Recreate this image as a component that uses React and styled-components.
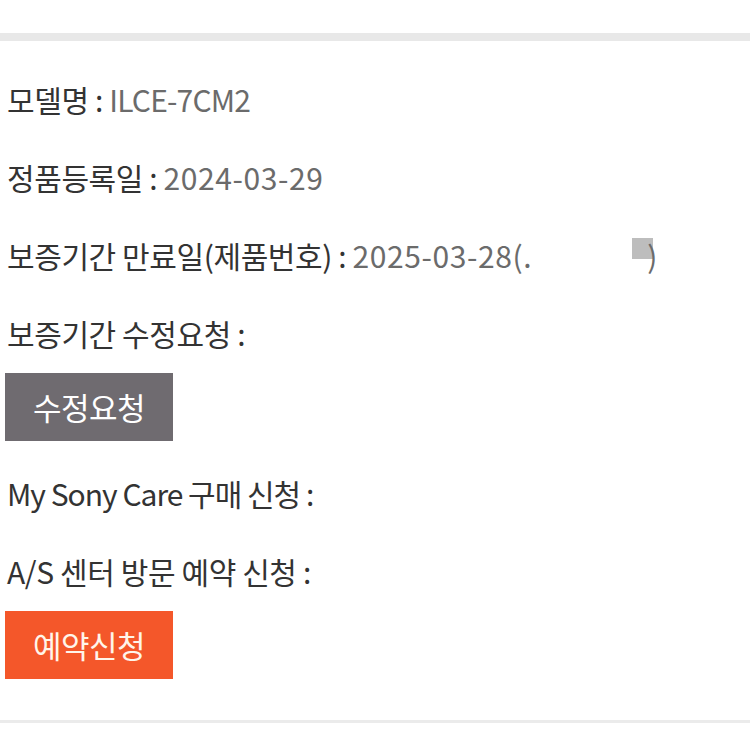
import React from "react";
import styled, { createGlobalStyle } from "styled-components";

const GlobalStyle = createGlobalStyle`
  html, body {
    margin: 0;
    padding: 0;
    background: #fff;
  }
  body {
    font-family: "Noto Sans CJK KR", "Noto Sans", sans-serif;
  }
`;

const Page = styled.div`
  width: 750px;
  height: 750px;
  background: #fff;
  padding-top: 33px;
  box-sizing: border-box;
`;

const Band = styled.div`
  height: 8px;
  background: #e8e8e8;
`;

const Section = styled.section`
  display: flex;
  flex-direction: column;
  align-items: flex-start;
  padding: 20px 0 0 7px;
  border-bottom: 3px solid #ebebeb;
`;

const Line = styled.div`
  height: 78px;
  line-height: 76px;
  font-size: 30px;
  letter-spacing: ${(p) => (p.$tight ? "-1px" : "-0.4px")};
  color: #333;
  white-space: nowrap;
`;

const Value = styled.span`
  color: #6b6b6b;
  letter-spacing: ${(p) => (p.$tight ? "-0.8px" : "0.6px")};
`;

const Masked = styled.span`
  display: inline-block;
  width: ${(p) => p.$w}px;
`;

const Redact = styled.span`
  display: inline-block;
  width: 21px;
  height: 21px;
  background: #bdbdbd;
  vertical-align: 9px;
  margin-right: -6px;
`;

const ButtonRow = styled.div`
  margin: 0 0 ${(p) => p.$gap}px -2px;
`;

const Button = styled.button`
  width: 168px;
  height: 68px;
  border: none;
  border-radius: 0;
  padding: 0 0 2px;
  background: ${(p) => (p.$accent ? "#f4572a" : "#6f6b70")};
  color: ${(p) => (p.$accent ? "#fff5ea" : "#fff")};
  font-family: "Noto Sans CJK KR", "Noto Sans", sans-serif;
  font-size: 31px;
  letter-spacing: -0.5px;
  cursor: pointer;
`;

export default function App() {
  return (
    <>
      <GlobalStyle />
      <Page>
        <Band />
        <Section>
          <Line>
            모델명 : <Value $tight>ILCE-7CM2</Value>
          </Line>
          <Line>
            정품등록일 : <Value>2024-03-29</Value>
          </Line>
          <Line>
            보증기간 만료일(제품번호) :{" "}
            <Value>
              2025-03-28(.
              <Masked $w={100} />
              <Redact />)
            </Value>
          </Line>
          <Line>보증기간 수정요청 :</Line>
          <ButtonRow $gap={14}>
            <Button>수정요청</Button>
          </ButtonRow>
          <Line $tight>My Sony Care 구매 신청 :</Line>
          <Line>A/S 센터 방문 예약 신청 :</Line>
          <ButtonRow $gap={41}>
            <Button $accent>예약신청</Button>
          </ButtonRow>
        </Section>
      </Page>
    </>
  );
}
